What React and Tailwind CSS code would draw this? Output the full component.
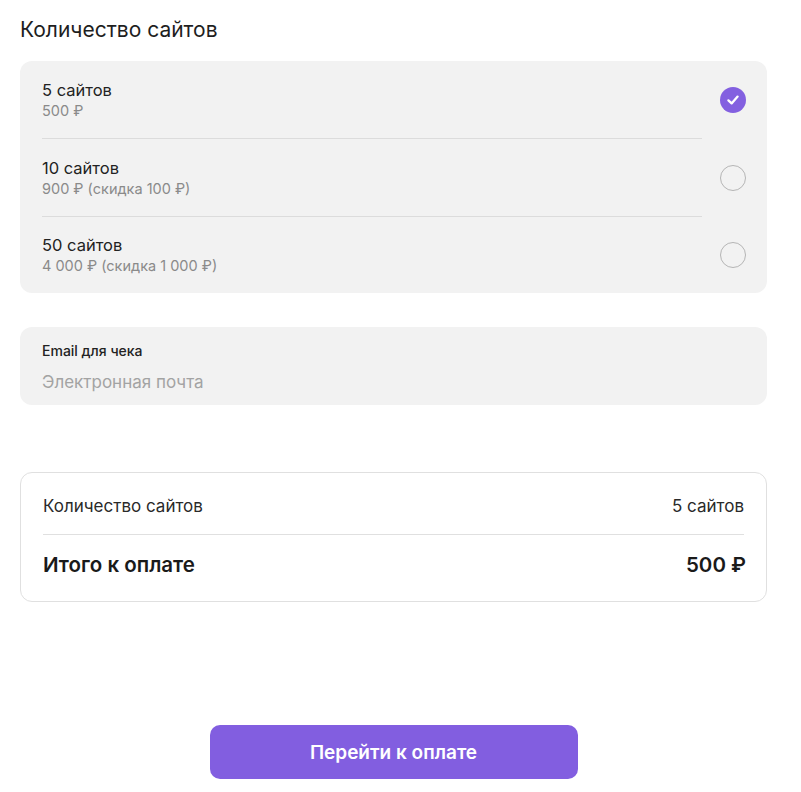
import React from "react";

const options = [
  { title: "5 сайтов", sub: "500 ₽", checked: true, h: "h-[78px]" },
  { title: "10 сайтов", sub: "900 ₽ (скидка 100 ₽)", checked: false, h: "h-[78px]" },
  { title: "50 сайтов", sub: "4 000 ₽ (скидка 1 000 ₽)", checked: false, h: "h-[76px]" },
];

function Check({ checked }) {
  if (checked) {
    return (
      <div className="w-[26px] h-[26px] rounded-full bg-[#8360e0] flex items-center justify-center shrink-0">
        <svg width="14" height="14" viewBox="0 0 14 14" fill="none">
          <path d="M2.4 7.4 L5.6 10.4 L11.6 3.6" stroke="white" strokeWidth="2.3" strokeLinecap="round" strokeLinejoin="round" />
        </svg>
      </div>
    );
  }
  return <div className="w-[26px] h-[26px] rounded-full border border-[#b5b5b5] shrink-0" />;
}

export default function App() {
  return (
    <div className="w-[801px] h-[792px] bg-white pl-5 text-[#1e1e1e]" style={{ fontFamily: "Inter, 'Noto Sans', sans-serif" }}>
      <div className="w-[747px] flex flex-col">
        <h1 className="mt-[16px] text-[21px] leading-[28px] font-normal">Количество сайтов</h1>

        <div className="mt-[17px] bg-[#f2f2f2] rounded-[12px] flex flex-col">
          {options.map((o, i) => (
            <div key={i} className="flex items-stretch pl-[22px] pr-[21px] gap-[18px]">
              <div className={`flex-1 flex flex-col justify-center ${o.h} ${i < options.length - 1 ? "border-b border-[#dcdcdc]" : ""}`}>
                <div className="text-[16.5px] leading-[21px] text-[#222]">{o.title}</div>
                <div className="text-[14.5px] leading-[19px] text-[#8a8a8a]">{o.sub}</div>
              </div>
              <div className="flex items-center">
                <Check checked={o.checked} />
              </div>
            </div>
          ))}
        </div>

        <div className="mt-[34px] bg-[#f2f2f2] rounded-[12px] h-[78px] px-[22px] pt-[15px]">
          <div className="text-[14px] leading-[18px] font-medium text-[#222]">Email для чека</div>
          <div className="mt-[11px] text-[17px] leading-[22px] text-[#a3a3a3]">Электронная почта</div>
        </div>

        <div className="mt-[67px] border border-[#e0e0e0] rounded-[12px] px-[22px]">
          <div className="h-[62px] pt-[7px] flex items-center justify-between border-b border-[#e0e0e0] text-[17px] text-[#2a2a2a]">
            <span>Количество сайтов</span>
            <span>5 сайтов</span>
          </div>
          <div className="h-[66px] pb-[5px] flex items-center justify-between text-[20.5px] font-semibold text-[#1a1a1a]">
            <span>Итого к оплате</span>
            <span className="mr-[-2px]">500 ₽</span>
          </div>
        </div>

        <div className="flex justify-center mt-[123px]">
          <button className="w-[368px] h-[54px] pt-[3px] rounded-[10px] bg-[#825ee0] text-white text-[19px] font-semibold">
            Перейти к оплате
          </button>
        </div>
      </div>
    </div>
  );
}
